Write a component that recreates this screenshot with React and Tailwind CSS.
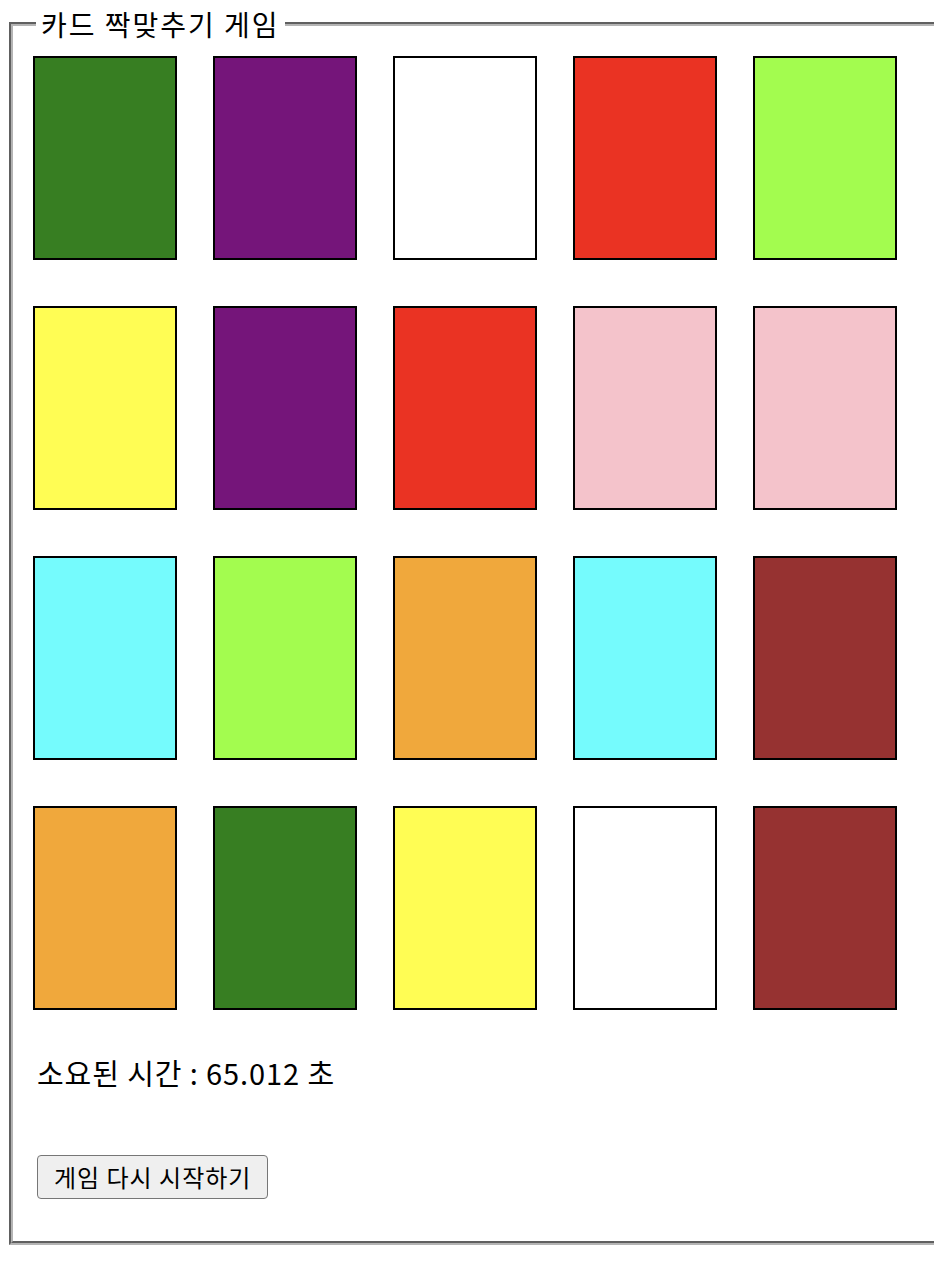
import React from 'react';

const rows = [
  ['#377e22', '#75157a', '#ffffff', '#ea3323', '#a3fc4f'],
  ['#fffd54', '#75157a', '#ea3323', '#f4c3cb', '#f4c3cb'],
  ['#75fbfd', '#a3fc4f', '#f0a83c', '#75fbfd', '#963231'],
  ['#f0a83c', '#377e22', '#fffd54', '#ffffff', '#963231'],
];

const font = { fontFamily: '"Noto Sans CJK KR", "Noto Sans", sans-serif' };

export default function App() {
  return (
    <div className="w-full h-[1274px] overflow-hidden bg-white text-black" style={font}>
      <fieldset className="ml-[9px] mt-[9px] w-[1000px] h-[1236px] border-4 [border-style:groove] border-[#b4b4b4] pl-[20px] pt-[17px]">
        <legend className="ml-[3px] px-[5px] text-[28px] leading-[30px] tracking-[2px]">카드 짝맞추기 게임</legend>
        <div className="grid grid-cols-[repeat(5,144px)] gap-x-[36px] gap-y-[46px]">
          {rows.flat().map((c, i) => (
            <div key={i} className="h-[204px] w-[144px] border-2 border-black" style={{ backgroundColor: c }} />
          ))}
        </div>
        <div className="mt-[45px] pl-[4px] text-[29px] leading-[34px] tracking-[0.9px]">소요된 시간 : 65.012 초</div>
        <button
          type="button"
          className="mt-[66px] ml-[4px] h-[44px] rounded-[4px] border border-[#767676] bg-[#efefef] px-[16px] text-[24px] leading-[28px] tracking-[1px]"
        >
          게임 다시 시작하기
        </button>
      </fieldset>
    </div>
  );
}
